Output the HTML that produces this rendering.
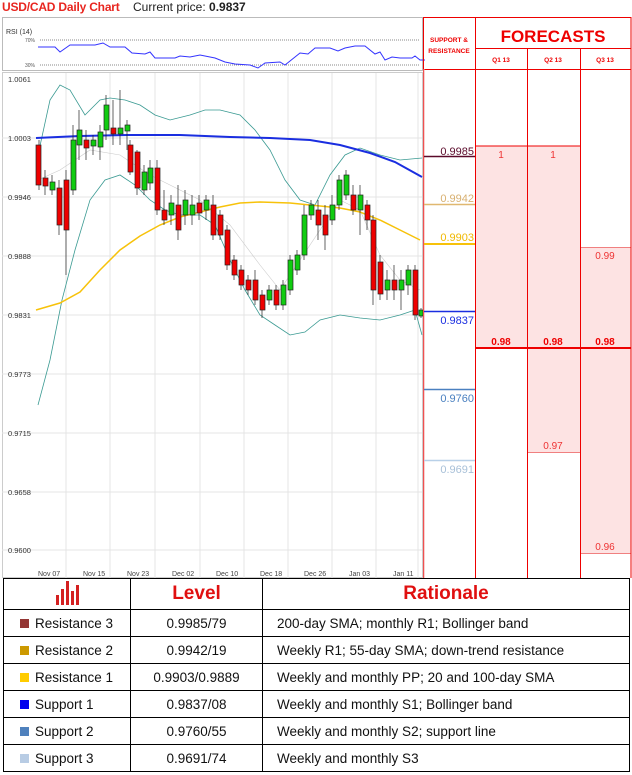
<!DOCTYPE html>
<html><head><meta charset="utf-8"><style>
*{margin:0;padding:0;box-sizing:border-box}
body{width:632px;height:775px;background:#fff;font-family:"Liberation Sans",sans-serif;position:relative;overflow:hidden}
.a{position:absolute}
table{border-collapse:collapse;position:absolute;left:3px;top:578px;width:627px}
td{border:1px solid #000;height:27px;font-size:13.5px;color:#111}
</style></head><body>
<div class="a" style="left:2px;top:0;font-size:12px;font-weight:bold;color:#e8251f;letter-spacing:-0.2px">USD/CAD Daily Chart</div>
<div class="a" style="left:133px;top:0;font-size:12px;color:#222">Current price: <b>0.9837</b></div>

<svg class="a" style="left:0;top:0" width="632" height="578">
<rect x="2.5" y="17.5" width="420" height="53" fill="#fff" stroke="#bbb"/>
<text x="6" y="34" font-size="7" font-family="Liberation Sans" fill="#333">RSI (14)</text>
<text x="25" y="42" font-size="5" fill="#555">70%</text>
<text x="25" y="67" font-size="5" fill="#555">30%</text>
<line x1="40" y1="40" x2="420" y2="40" stroke="#888" stroke-dasharray="1,1"/>
<line x1="40" y1="65" x2="420" y2="65" stroke="#888" stroke-dasharray="1,1"/>
<polyline fill="none" stroke="#3333ff" stroke-width="1" points="38,47 55,47 60,52 70,45 95,45 103,43 110,47 125,47 132,53 145,54 150,52 155,58 175,58 180,56 190,57 200,55 215,58 225,62 235,64 250,65 258,68 265,63 280,62 285,65 300,53 308,54 315,48 330,48 338,51 345,48 355,46 365,46 375,54 380,52 385,60 392,57 400,58 412,58 415,56 420,60 425,60"/>
<rect x="2.5" y="72.5" width="420" height="505" fill="#fff" stroke="#ccc"/>
<g stroke="#e4e4e4">
<line x1="2" y1="138" x2="422" y2="138"/><line x1="2" y1="197" x2="422" y2="197"/><line x1="2" y1="256" x2="422" y2="256"/><line x1="2" y1="315" x2="422" y2="315"/><line x1="2" y1="374" x2="422" y2="374"/><line x1="2" y1="433" x2="422" y2="433"/><line x1="2" y1="492" x2="422" y2="492"/><line x1="2" y1="550" x2="422" y2="550"/>
<line x1="66" y1="73" x2="66" y2="578"/><line x1="110" y1="73" x2="110" y2="578"/><line x1="155" y1="73" x2="155" y2="578"/><line x1="200" y1="73" x2="200" y2="578"/><line x1="244" y1="73" x2="244" y2="578"/><line x1="288" y1="73" x2="288" y2="578"/><line x1="332" y1="73" x2="332" y2="578"/><line x1="376" y1="73" x2="376" y2="578"/><line x1="418" y1="73" x2="418" y2="578"/>
</g>
<g font-size="7.5" fill="#333">
<text x="8" y="82">1.0061</text><text x="8" y="141">1.0003</text><text x="8" y="200">0.9946</text><text x="8" y="259">0.9888</text><text x="8" y="318">0.9831</text><text x="8" y="377">0.9773</text><text x="8" y="436">0.9715</text><text x="8" y="495">0.9658</text><text x="8" y="553">0.9600</text>
</g>
<g font-size="7" fill="#444">
<text x="38" y="576">Nov 07</text><text x="83" y="576">Nov 15</text><text x="127" y="576">Nov 23</text><text x="172" y="576">Dec 02</text><text x="216" y="576">Dec 10</text><text x="260" y="576">Dec 18</text><text x="304" y="576">Dec 26</text><text x="349" y="576">Jan 03</text><text x="393" y="576">Jan 11</text>
</g>
<polyline fill="none" stroke="#3a9a92" stroke-width="0.8" points="38,405 50,360 62,300 75,250 90,200 105,180 120,175 135,185 150,200 165,210 180,215 200,215 215,225 230,260 245,290 260,315 275,325 290,335 305,332 320,320 340,315 360,318 380,320 400,315 415,310 422,335"/>
<polyline fill="none" stroke="#3a9a92" stroke-width="0.8" points="38,155 50,100 60,85 70,90 85,115 100,100 110,98 125,100 140,105 155,115 170,120 190,115 205,110 220,110 240,115 255,130 270,150 285,180 300,200 315,205 330,175 345,155 360,148 380,155 400,160 422,158"/>
<polyline fill="none" stroke="#ccc" stroke-width="0.6" points="38,180 60,170 90,150 120,155 150,175 180,190 200,200 230,225 260,265 280,290 300,260 320,230 340,200 360,210 380,255 400,280 420,290"/>
<polyline fill="none" stroke="#1a2ee0" stroke-width="2" points="36,138 80,136 130,135 180,135 230,137 270,138 310,140 340,145 370,153 395,162 422,177"/>
<polyline fill="none" stroke="#f7c20a" stroke-width="1.5" points="36,310 60,303 80,292 100,270 120,250 140,236 160,225 180,217 200,212 220,207 240,203 260,202 290,203 320,206 340,208 360,212 380,220 400,230 420,240"/>
<g stroke="#222" stroke-width="0.7">
<line x1="39" y1="140" x2="39" y2="190"/><rect x="36" y="145" width="5" height="40" fill="#e00"/>
<line x1="45" y1="170" x2="45" y2="195"/><rect x="43" y="178" width="5" height="8" fill="#e00"/>
<line x1="52" y1="175" x2="52" y2="195"/><rect x="50" y="182" width="5" height="8" fill="#1c1"/>
<line x1="59" y1="180" x2="59" y2="235"/><rect x="57" y="188" width="5" height="37" fill="#e00"/>
<line x1="66" y1="170" x2="66" y2="275"/><rect x="64" y="180" width="5" height="50" fill="#e00"/>
<line x1="73" y1="125" x2="73" y2="195"/><rect x="71" y="140" width="5" height="50" fill="#1c1"/>
<line x1="79" y1="110" x2="79" y2="160"/><rect x="77" y="130" width="5" height="15" fill="#1c1"/>
<line x1="86" y1="130" x2="86" y2="160"/><rect x="84" y="140" width="5" height="8" fill="#e00"/>
<line x1="93" y1="135" x2="93" y2="155"/><rect x="91" y="140" width="5" height="6" fill="#1c1"/>
<line x1="100" y1="125" x2="100" y2="160"/><rect x="98" y="132" width="5" height="15" fill="#1c1"/>
<line x1="106" y1="95" x2="106" y2="140"/><rect x="104" y="105" width="5" height="25" fill="#1c1"/>
<line x1="113" y1="100" x2="113" y2="145"/><rect x="111" y="128" width="5" height="6" fill="#e00"/>
<line x1="120" y1="90" x2="120" y2="145"/><rect x="118" y="128" width="5" height="6" fill="#1c1"/>
<line x1="127" y1="120" x2="127" y2="150"/><rect x="125" y="125" width="5" height="6" fill="#1c1"/>
<line x1="130" y1="140" x2="130" y2="175"/><rect x="128" y="145" width="5" height="27" fill="#e00"/>
<line x1="137" y1="150" x2="137" y2="195"/><rect x="135" y="152" width="5" height="36" fill="#e00"/>
<line x1="144" y1="165" x2="144" y2="195"/><rect x="142" y="172" width="5" height="18" fill="#1c1"/>
<line x1="150" y1="160" x2="150" y2="190"/><rect x="148" y="168" width="5" height="15" fill="#1c1"/>
<line x1="157" y1="160" x2="157" y2="215"/><rect x="155" y="168" width="5" height="42" fill="#e00"/>
<line x1="164" y1="190" x2="164" y2="225"/><rect x="162" y="210" width="5" height="10" fill="#e00"/>
<line x1="171" y1="195" x2="171" y2="225"/><rect x="169" y="203" width="5" height="12" fill="#1c1"/>
<line x1="178" y1="185" x2="178" y2="240"/><rect x="176" y="205" width="5" height="25" fill="#e00"/>
<line x1="185" y1="190" x2="185" y2="225"/><rect x="183" y="200" width="5" height="15" fill="#1c1"/>
<line x1="192" y1="195" x2="192" y2="225"/><rect x="190" y="205" width="5" height="10" fill="#1c1"/>
<line x1="199" y1="195" x2="199" y2="220"/><rect x="197" y="203" width="5" height="10" fill="#e00"/>
<line x1="206" y1="195" x2="206" y2="220"/><rect x="204" y="200" width="5" height="10" fill="#1c1"/>
<line x1="213" y1="195" x2="213" y2="240"/><rect x="211" y="205" width="5" height="30" fill="#e00"/>
<line x1="220" y1="210" x2="220" y2="240"/><rect x="218" y="215" width="5" height="20" fill="#e00"/>
<line x1="227" y1="225" x2="227" y2="270"/><rect x="225" y="230" width="5" height="35" fill="#e00"/>
<line x1="234" y1="255" x2="234" y2="280"/><rect x="232" y="260" width="5" height="15" fill="#e00"/>
<line x1="241" y1="265" x2="241" y2="290"/><rect x="239" y="270" width="5" height="15" fill="#e00"/>
<line x1="248" y1="275" x2="248" y2="295"/><rect x="246" y="280" width="5" height="10" fill="#e00"/>
<line x1="255" y1="270" x2="255" y2="305"/><rect x="253" y="280" width="5" height="20" fill="#e00"/>
<line x1="262" y1="290" x2="262" y2="318"/><rect x="260" y="295" width="5" height="15" fill="#e00"/>
<line x1="269" y1="285" x2="269" y2="305"/><rect x="267" y="290" width="5" height="10" fill="#1c1"/>
<line x1="276" y1="285" x2="276" y2="310"/><rect x="274" y="290" width="5" height="15" fill="#e00"/>
<line x1="283" y1="280" x2="283" y2="310"/><rect x="281" y="285" width="5" height="20" fill="#1c1"/>
<line x1="290" y1="255" x2="290" y2="295"/><rect x="288" y="260" width="5" height="30" fill="#1c1"/>
<line x1="297" y1="250" x2="297" y2="275"/><rect x="295" y="255" width="5" height="15" fill="#1c1"/>
<line x1="304" y1="205" x2="304" y2="260"/><rect x="302" y="215" width="5" height="40" fill="#1c1"/>
<line x1="311" y1="200" x2="311" y2="220"/><rect x="309" y="205" width="5" height="10" fill="#1c1"/>
<line x1="318" y1="200" x2="318" y2="240"/><rect x="316" y="210" width="5" height="15" fill="#e00"/>
<line x1="325" y1="205" x2="325" y2="250"/><rect x="323" y="215" width="5" height="20" fill="#e00"/>
<line x1="332" y1="195" x2="332" y2="225"/><rect x="330" y="205" width="5" height="15" fill="#1c1"/>
<line x1="339" y1="175" x2="339" y2="210"/><rect x="337" y="180" width="5" height="25" fill="#1c1"/>
<line x1="346" y1="170" x2="346" y2="200"/><rect x="344" y="175" width="5" height="20" fill="#1c1"/>
<line x1="353" y1="185" x2="353" y2="215"/><rect x="351" y="195" width="5" height="15" fill="#e00"/>
<line x1="360" y1="185" x2="360" y2="235"/><rect x="358" y="195" width="5" height="15" fill="#1c1"/>
<line x1="367" y1="200" x2="367" y2="230"/><rect x="365" y="205" width="5" height="15" fill="#e00"/>
<line x1="373" y1="215" x2="373" y2="305"/><rect x="371" y="220" width="5" height="70" fill="#e00"/>
<line x1="380" y1="255" x2="380" y2="300"/><rect x="378" y="262" width="5" height="32" fill="#e00"/>
<line x1="387" y1="270" x2="387" y2="300"/><rect x="385" y="280" width="5" height="10" fill="#1c1"/>
<line x1="394" y1="265" x2="394" y2="300"/><rect x="392" y="280" width="5" height="10" fill="#e00"/>
<line x1="401" y1="270" x2="401" y2="310"/><rect x="399" y="280" width="5" height="10" fill="#1c1"/>
<line x1="408" y1="265" x2="408" y2="295"/><rect x="406" y="270" width="5" height="15" fill="#1c1"/>
<line x1="415" y1="265" x2="415" y2="320"/><rect x="413" y="270" width="5" height="45" fill="#e00"/>
<line x1="421" y1="308" x2="421" y2="318"/><rect x="419" y="310" width="4" height="6" fill="#1c1"/>
</g>
<rect x="476" y="146" width="51" height="202" fill="#fde3e3"/>
<rect x="527" y="146" width="53" height="306" fill="#fde3e3"/>
<rect x="580" y="247" width="51" height="306" fill="#fde3e3"/>
<line x1="476" y1="146" x2="580" y2="146" stroke="#e00"/>
<line x1="580" y1="247.5" x2="631" y2="247.5" stroke="#f08080"/>
<line x1="527" y1="452.5" x2="580" y2="452.5" stroke="#f08080"/>
<line x1="580" y1="553.5" x2="631" y2="553.5" stroke="#f08080"/>
<line x1="476" y1="348" x2="631" y2="348" stroke="#e00" stroke-width="2"/>
<g stroke="#e00"><line x1="423.5" y1="17" x2="423.5" y2="578"/><line x1="475.5" y1="17" x2="475.5" y2="578"/><line x1="631" y1="17" x2="631" y2="578"/><line x1="423" y1="17.5" x2="631" y2="17.5"/><line x1="476" y1="48.5" x2="631" y2="48.5"/><line x1="423" y1="69.5" x2="631" y2="69.5"/><line x1="527.5" y1="48" x2="527.5" y2="578"/><line x1="580.5" y1="48" x2="580.5" y2="578"/></g>
<line x1="424" y1="69" x2="424" y2="578" stroke="#f3a0a0"/>
<text x="449" y="42" font-size="6.5" font-weight="bold" fill="#e00" text-anchor="middle">SUPPORT &amp;</text>
<text x="449" y="53" font-size="6.5" font-weight="bold" fill="#e00" text-anchor="middle">RESISTANCE</text>
<text x="553" y="42" font-size="17" font-weight="bold" fill="#e00" text-anchor="middle">FORECASTS</text>
<g font-size="6.5" font-weight="bold" fill="#e00" text-anchor="middle"><text x="501" y="62">Q1 13</text><text x="553" y="62">Q2 13</text><text x="605" y="62">Q3 13</text></g>
<g font-size="10" fill="#e33" text-anchor="middle"><text x="501" y="158">1</text><text x="553" y="158">1</text><text x="605" y="259">0.99</text><text x="553" y="449">0.97</text><text x="605" y="550">0.96</text></g>
<g font-size="10" font-weight="bold" fill="#e00" text-anchor="middle"><text x="501" y="345">0.98</text><text x="553" y="345">0.98</text><text x="605" y="345">0.98</text></g>
<g font-size="11" text-anchor="end">
<line x1="424" y1="156.5" x2="475" y2="156.5" stroke="#5a0a2a" stroke-width="1.5"/><text x="474" y="155" fill="#5a0a2a">0.9985</text>
<line x1="424" y1="204.5" x2="475" y2="204.5" stroke="#e0b870" stroke-width="1.5"/><text x="474" y="202" fill="#d8b070">0.9942</text>
<line x1="424" y1="244" x2="475" y2="244" stroke="#f7c20a" stroke-width="2"/><text x="474" y="241" fill="#f0b800">0.9903</text>
<line x1="424" y1="311.5" x2="475" y2="311.5" stroke="#1a2ee0" stroke-width="1.5"/><text x="474" y="324" fill="#1a2ee0">0.9837</text>
<line x1="424" y1="389.5" x2="475" y2="389.5" stroke="#4a80c0" stroke-width="1.5"/><text x="474" y="402" fill="#4a80c0">0.9760</text>
<line x1="424" y1="460.5" x2="475" y2="460.5" stroke="#b8d0e8" stroke-width="1.5"/><text x="474" y="473" fill="#a8c0d8">0.9691</text>
</g>
</svg>

<table>
<tr style="height:31px"><td style="width:127px;height:31px;text-align:center"><svg width="26" height="24" viewBox="0 0 26 24"><g fill="#d42020"><rect x="2" y="14" width="3" height="10"/><rect x="7" y="8" width="3" height="16"/><rect x="12" y="0" width="3" height="24"/><rect x="17" y="10" width="3" height="14"/><rect x="22" y="4" width="3" height="20"/></g></svg></td>
<td style="width:132px;text-align:center;font-size:19px;font-weight:bold;color:#e01010">Level</td>
<td style="text-align:center;font-size:19px;font-weight:bold;color:#e01010">Rationale</td></tr>
<tr><td style="padding-left:16px"><span style="display:inline-block;width:9px;height:9px;background:#943634;margin-right:6px"></span>Resistance 3</td><td style="text-align:center">0.9985/79</td><td style="padding-left:14px">200-day SMA; monthly R1; Bollinger band</td></tr>
<tr><td style="padding-left:16px"><span style="display:inline-block;width:9px;height:9px;background:#cc9900;margin-right:6px"></span>Resistance 2</td><td style="text-align:center">0.9942/19</td><td style="padding-left:14px">Weekly R1; 55-day SMA; down-trend resistance</td></tr>
<tr><td style="padding-left:16px"><span style="display:inline-block;width:9px;height:9px;background:#ffcc00;margin-right:6px"></span>Resistance 1</td><td style="text-align:center">0.9903/0.9889</td><td style="padding-left:14px">Weekly and monthly PP; 20 and 100-day SMA</td></tr>
<tr><td style="padding-left:16px"><span style="display:inline-block;width:9px;height:9px;background:#0000ee;margin-right:6px"></span>Support 1</td><td style="text-align:center">0.9837/08</td><td style="padding-left:14px">Weekly and monthly S1; Bollinger band</td></tr>
<tr><td style="padding-left:16px"><span style="display:inline-block;width:9px;height:9px;background:#4f81bd;margin-right:6px"></span>Support 2</td><td style="text-align:center">0.9760/55</td><td style="padding-left:14px">Weekly and monthly S2; support line</td></tr>
<tr><td style="padding-left:16px"><span style="display:inline-block;width:9px;height:9px;background:#b8cce4;margin-right:6px"></span>Support 3</td><td style="text-align:center">0.9691/74</td><td style="padding-left:14px">Weekly and monthly S3</td></tr>
</table>
</body></html>
